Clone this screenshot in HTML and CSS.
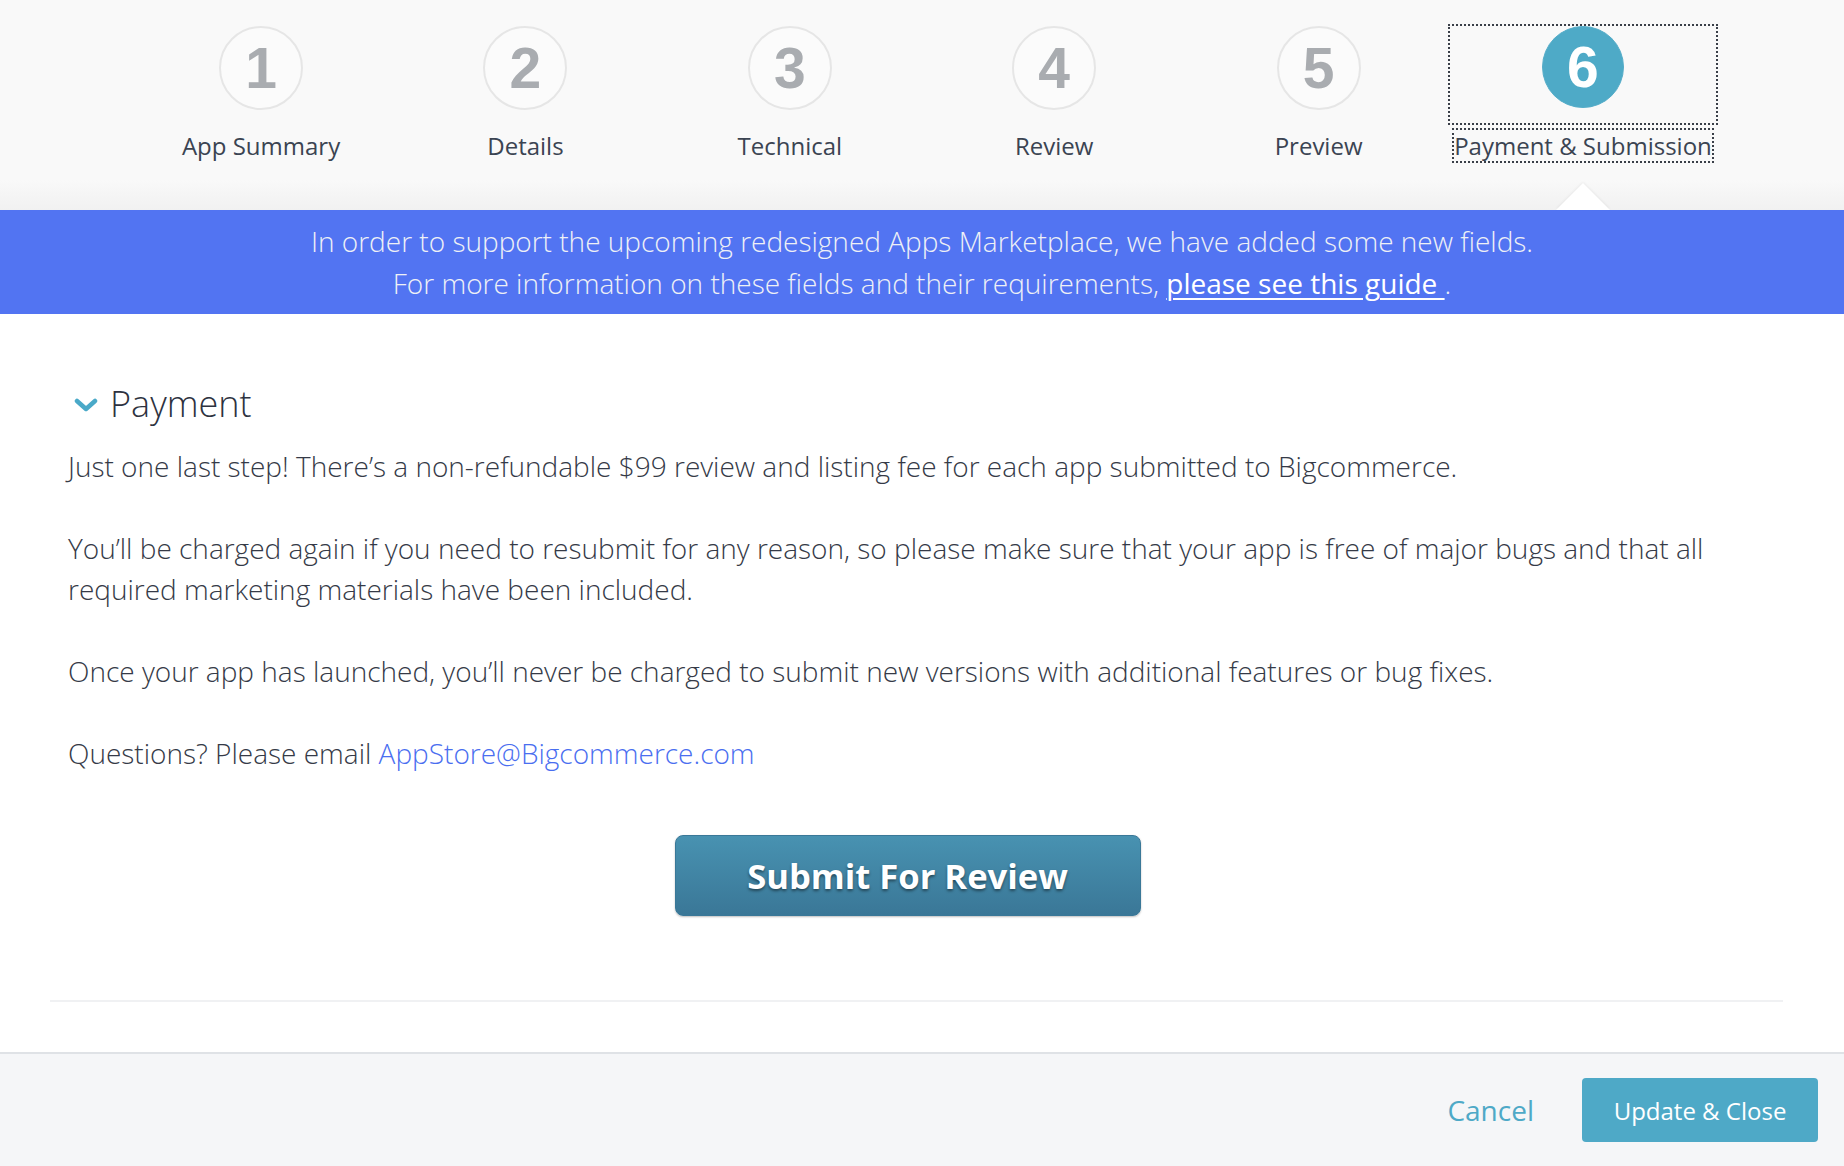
FILE: index.html
```html
<!DOCTYPE html>
<html lang="en">
<head>
<meta charset="utf-8">
<title>Payment &amp; Submission</title>
<link rel="stylesheet" href="styles.css">
</head>
<body>
<div class="page">
  <header class="steps-bar">
    <ol class="steps">
      <li class="step"><a class="step-link"><span class="circle">1</span></a><span class="step-label">App Summary</span></li>
      <li class="step"><a class="step-link"><span class="circle">2</span></a><span class="step-label">Details</span></li>
      <li class="step"><a class="step-link"><span class="circle">3</span></a><span class="step-label">Technical</span></li>
      <li class="step"><a class="step-link"><span class="circle">4</span></a><span class="step-label">Review</span></li>
      <li class="step"><a class="step-link"><span class="circle">5</span></a><span class="step-label">Preview</span></li>
      <li class="step active"><a class="step-link focused"><span class="circle">6</span></a><span class="step-label focused">Payment &amp; Submission</span><span class="pointer"></span></li>
    </ol>
  </header>
  <div class="banner">
    <p>In order to support the upcoming redesigned Apps Marketplace, we have added some new fields.</p>
    <p>For more information on these fields and their requirements, <a class="banner-link" href="#">please see this guide </a>.</p>
  </div>
  <main class="main">
    <section class="payment">
      <h2 class="section-title">
        <svg class="chevron" width="24" height="16" viewBox="0 0 24 16"><polyline points="3,4 12,12 21,4" fill="none" stroke="#4aa9c8" stroke-width="4.5" stroke-linecap="round" stroke-linejoin="round"/></svg>
        Payment
      </h2>
      <div class="copy">
        <p>Just one last step! There’s a non-refundable $99 review and listing fee for each app submitted to Bigcommerce.</p>
        <p>You’ll be charged again if you need to resubmit for any reason, so please make sure that your app is free of major bugs and that all required marketing materials have been included.</p>
        <p>Once your app has launched, you’ll never be charged to submit new versions with additional features or bug fixes.</p>
        <p>Questions? Please email <a class="email" href="#">AppStore@Bigcommerce.com</a></p>
      </div>
      <div class="submit-row">
        <button class="submit-btn">Submit For Review</button>
      </div>
    </section>
    <hr class="rule">
  </main>
  <footer class="footer">
    <a class="cancel" href="#">Cancel</a>
    <button class="update-btn">Update &amp; Close</button>
  </footer>
</div>
</body>
</html>
```
FILE: styles.css
```css
* { box-sizing: border-box; }
html, body { margin: 0; padding: 0; }
body {
  font-family: "Open Sans", "Noto Sans", sans-serif;
  background: #ffffff;
  color: #3a4150;
}
.page {
  width: 1844px;
  height: 1166px;
  display: flex;
  flex-direction: column;
  overflow: hidden;
}

/* Steps header */
.steps-bar {
  height: 210px;
  background: linear-gradient(to bottom, #f9f9f9 0px, #f9f9f9 180px, #f1f1f1 210px);
  padding-top: 26px;
}
.steps {
  list-style: none;
  margin: 0 auto;
  padding: 0;
  display: grid;
  grid-template-columns: repeat(6, 264.4px);
  justify-content: center;
}
.step {
  position: relative;
  display: flex;
  flex-direction: column;
  align-items: center;
}
.step-link {
  width: 266px;
  height: 97px;
  display: flex;
  justify-content: center;
  align-items: flex-start;
  margin: 0 -1px;
}
.circle {
  width: 84px;
  height: 84px;
  border-radius: 50%;
  border: 2px solid #e6e6e6;
  background: #fbfbfb;
  display: flex;
  align-items: center;
  justify-content: center;
  font-family: "Liberation Sans", Arial, sans-serif;
  font-weight: 700;
  font-size: 57px;
  color: #a9acb0;
  line-height: 1;
}
.step.active .circle {
  width: 82px;
  height: 82px;
  border: 1px solid #55adc9;
  background: #4eaac7;
  color: #ffffff;
}
.step-label {
  margin-top: 7px;
  font-size: 24px;
  line-height: 31px;
  color: #3b4452;
  white-space: nowrap;
}
.focused {
  outline: 2px dotted #3a3f48;
}
.pointer {
  position: absolute;
  left: 50%;
  top: 157px;
  margin-left: -27px;
  width: 0;
  height: 0;
  border-left: 27px solid transparent;
  border-right: 27px solid transparent;
  border-bottom: 27px solid #ffffff;
  filter: drop-shadow(0 -1px 1px rgba(0,0,0,0.06));
}

/* Banner */
.banner {
  height: 104px;
  background: #5274f2;
  color: #eef0f6;
  text-align: center;
  padding: 10px 0;
  font-size: 28px;
  font-weight: 300;
  line-height: 42px;
}
.banner p { margin: 0; }
.banner-link {
  color: #ffffff;
  text-decoration: underline;
  font-weight: 400;
  text-underline-offset: 4px;
  text-decoration-thickness: 2px;
}

/* Main */
.main {
  flex: 1;
  background: #ffffff;
  padding: 0 61px 0 50px;
  display: flex;
  flex-direction: column;
}
.payment {
  padding: 66px 0 0 18px;
}
.section-title {
  margin: 0;
  display: flex;
  align-items: center;
  gap: 12px;
  font-size: 36px;
  font-weight: 300;
  line-height: 48px;
  color: #2d3240;
}
.chevron { margin-left: 6px; margin-top: 2px; }
.copy {
  margin-top: 18px;
  font-size: 28px;
  font-weight: 300;
  line-height: 41px;
  color: #353a47;
}
.copy p { margin: 0 0 41px 0; }
.copy p:last-child { margin-bottom: 0; }
.email {
  color: #4a6ef0;
  text-decoration: none;
}
.submit-row {
  display: flex;
  justify-content: center;
  margin-top: 61px;
}
.submit-btn {
  width: 466px;
  height: 81px;
  margin-left: -36px;
  border: 1px solid #3a7898;
  border-radius: 8px;
  background: linear-gradient(to bottom, #4892b1, #3a7797);
  color: #ffffff;
  font-family: "Open Sans", sans-serif;
  font-weight: 700;
  font-size: 34.6px;
  text-shadow: 0 2px 3px rgba(0,0,0,0.45);
  box-shadow: 0 1px 2px rgba(0,0,0,0.25);
}
.rule {
  margin: auto 0 50px 0;
  border: 0;
  height: 2px;
  background: #f0f1f3;
}

/* Footer */
.footer {
  height: 114px;
  border-top: 2px solid #dfe2e6;
  background: #f5f6f8;
  display: flex;
  align-items: center;
  justify-content: flex-end;
  gap: 48px;
  padding-right: 26px;
}
.cancel {
  color: #4ea9c7;
  text-decoration: none;
  font-size: 28px;
}
.update-btn {
  width: 236px;
  height: 64px;
  border: 0;
  border-radius: 4px;
  background: #4ea9c7;
  color: #ffffff;
  font-family: "Open Sans", sans-serif;
  font-size: 24px;
  font-weight: 400;
}
```
